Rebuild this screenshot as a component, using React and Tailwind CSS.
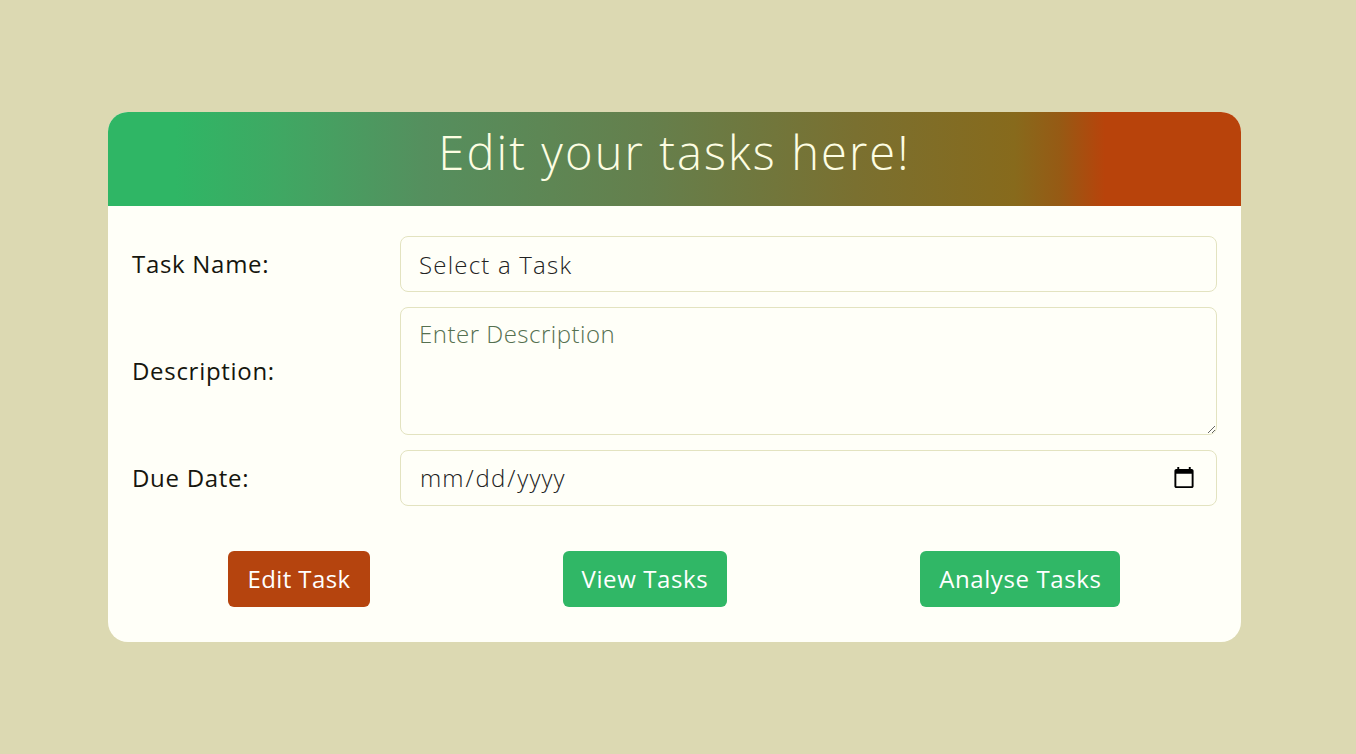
import React from 'react'

const font = { fontFamily: '"Open Sans", "Noto Sans", sans-serif' }

export default function App() {
  return (
    <div className="min-h-screen w-full bg-[#dcd9b2] pt-[112px] pl-[108px]" style={font}>
      <div className="w-[1133px] h-[530px] bg-[#fffff8] rounded-[20px] overflow-hidden flex flex-col">
        <div className="h-[94px] pb-[14px] flex items-center justify-center bg-[linear-gradient(to_right,#2fb665_6%,#3fa863_15%,#558f5e_28%,#657f4c_48%,#7a7030_66%,#876a1c_80%,#965a14_84%,#b8430b_88%,#b8430b_100%)]">
          <h1 className="text-[47px] font-light text-[#fdfde2] tracking-[2.1px]">Edit your tasks here!</h1>
        </div>

        <div className="flex-1 px-6 pt-[30px]">
          <div className="grid grid-cols-[268px_1fr] gap-y-[15px] items-center">
            <label className="text-[24px] font-medium text-[#16160e] tracking-[0.7px]">Task Name:</label>
            <input
              className="h-[56px] w-full rounded-lg border border-[#e3e3c0] bg-transparent px-[18px] text-[24px] font-light text-[#222] tracking-[1.2px] outline-none"
              defaultValue="Select a Task"
            />

            <label className="text-[24px] font-medium text-[#16160e] tracking-[0.7px]">Description:</label>
            <textarea
              className="h-[128px] w-full rounded-lg border border-[#e3e3c0] bg-transparent px-[18px] pt-[8px] text-[24px] font-light text-[#222] tracking-[0.5px] outline-none placeholder:text-[#557050]"
              placeholder="Enter Description"
            />

            <label className="text-[24px] font-medium text-[#16160e] tracking-[0.7px]">Due Date:</label>
            <input
              type="date"
              className="h-[56px] w-full rounded-lg border border-[#e3e3c0] bg-transparent px-[18px] text-[24px] font-light text-[#222] tracking-[1px] outline-none"
            />
          </div>

          <div className="flex justify-around mt-[45px]">
            <button className="h-[56px] px-[19px] rounded-md bg-[#b5440e] text-white text-[24px] font-medium tracking-[0.4px]">Edit Task</button>
            <button className="h-[56px] px-[19px] rounded-md bg-[#30b766] text-white text-[24px] font-medium tracking-[0.6px]">View Tasks</button>
            <button className="h-[56px] px-[19px] rounded-md bg-[#30b766] text-white text-[24px] font-medium tracking-[0.6px]">Analyse Tasks</button>
          </div>
        </div>
      </div>
    </div>
  )
}
